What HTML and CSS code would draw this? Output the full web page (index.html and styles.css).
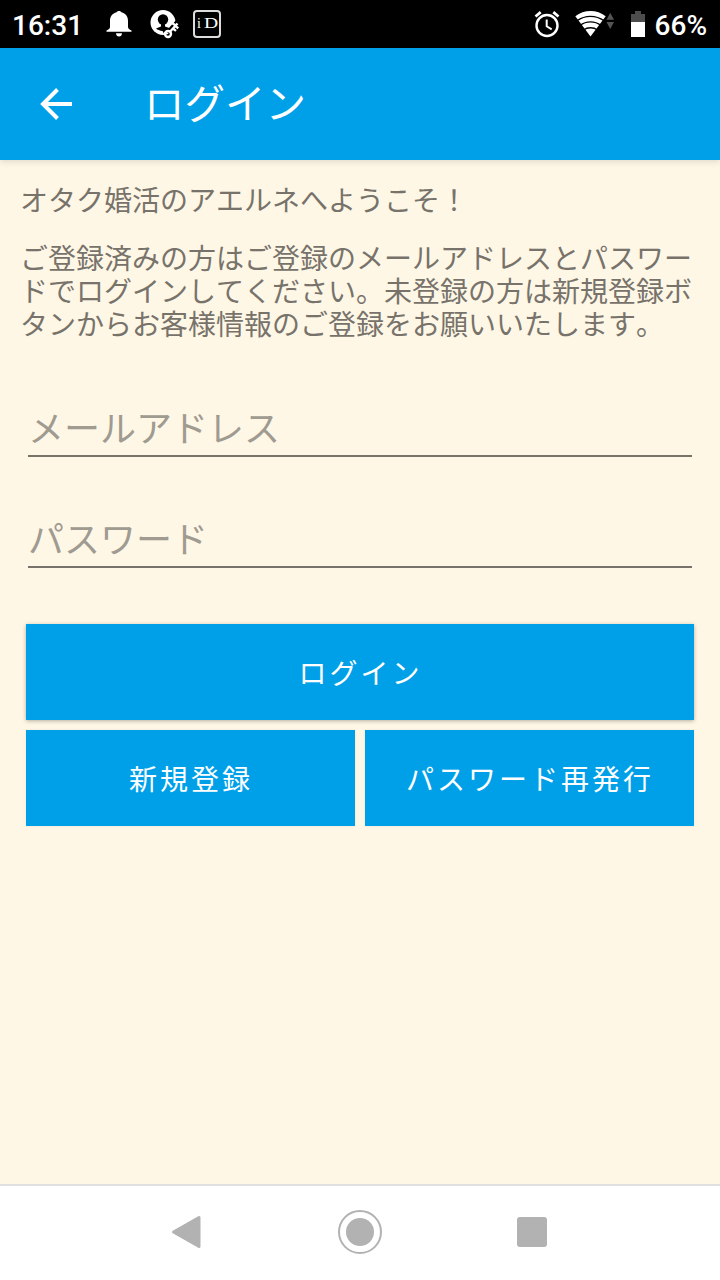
FILE: index.html
```html
<!DOCTYPE html>
<html lang="ja">
<head>
    <meta charset="UTF-8">
    <meta name="viewport" content="width=device-width, initial-scale=1.0">
    <title>ログイン</title>
    <link rel="stylesheet" href="styles.css">
</head>
<body>
    <div class="screen">
        <div class="status-bar">
            <div class="status-left">
                <span class="time">16:31</span>
                <svg class="icon-bell" width="26" height="28" viewBox="0 0 26 28" fill="#fff">
                    <path d="M13 1c1.400 0 2.100.6 2.400 1.300C19.600 3.300 22 6.500 22 10.800V17c0 1.500 1.300 2.700 3.500 3.600v1.200H.5v-1.200C2.700 19.700 4 18.500 4 17v-6.200C4 6.500 6.400 3.300 10.600 2.300 10.900 1.600 11.600 1 13 1z"/>
                    <path d="M10 23.200h6c0 2-1.300 3.300-3 3.300s-3-1.300-3-3.300z"/>
                </svg>
                <svg class="icon-user" width="30" height="30" viewBox="0 0 30 30">
                    <circle cx="13" cy="13.500" r="12.500" fill="#fff"/>
                    <circle cx="13" cy="10.500" r="5.200" fill="#000"/>
                    <path d="M11 14h4v3.500l5 1.800-5.500 6.200-2-3.500c-2.800-.3-5-1.200-6.500-2.500l5-2z" fill="#000"/>
                    <path d="M18.500 24.500L29 13" stroke="#000" stroke-width="7"/>
                    <circle cx="18" cy="25" r="3" fill="none" stroke="#fff" stroke-width="2.400"/>
                    <path d="M20 22.800L27.500 14.500M25.500 16.500l-3-2.200M23 19.500l3 2.400M25.300 17l3 2.200" fill="none" stroke="#fff" stroke-width="2.400"/>
                </svg>
                <span class="icon-id"><span>i</span><span class="id-wide">D</span></span>
            </div>
            <div class="status-right">
                <svg class="icon-alarm" width="26" height="28" viewBox="0 0 26 28" fill="none" stroke="#fff">
                    <circle cx="13" cy="15.500" r="10.500" stroke-width="2.400"/>
                    <path d="M12.700 9.500v6.800l5 3" stroke-width="2"/>
                    <path d="M1.500 6.500l5.200-4.300M24.500 6.500l-5.200-4.300" stroke-width="2.800"/>
                </svg>
                <svg class="icon-wifi" width="40" height="28" viewBox="0 0 40 28">
                    <path d="M.3 6.200C9-.8 22-.8 30.700 6.200L15.500 26.500z" fill="#fff"/>
                    <path d="M2 10.800c8-6 19-6 27 0M5 15.400c6.300-4.700 14.700-4.700 21 0M8.500 20c4-3 10-3 14 0" fill="none" stroke="#000" stroke-width="1.300"/>
                    <path d="M31.500 9.800h7.500L35.200 2.800zM31.500 12h7.500l-3.800 7z" fill="#555"/>
                </svg>
                <svg class="icon-battery" width="14" height="26" viewBox="0 0 14 26">
                    <path d="M4 0h6v3h4v8H0V3h4z" fill="#4d4d4d"/>
                    <path d="M0 11h14v15H0z" fill="#fff"/>
                </svg>
                <span class="percent">66%</span>
            </div>
        </div>

        <header class="app-bar">
            <svg width="32" height="32" viewBox="0 0 32 32" fill="none" stroke="#fff" stroke-width="4">
                <path d="M32 16H3M17.500 1.500L3 16l14.500 14.500"/>
            </svg>
            <h1>ログイン</h1>
        </header>

        <main class="content">
            <p class="welcome">オタク婚活のアエルネへようこそ！</p>
            <p class="description">ご登録済みの方はご登録のメールアドレスとパスワードでログインしてください。未登録の方は新規登録ボタンからお客様情報のご登録をお願いいたします。</p>
            <form class="login-form">
                <input type="email" class="field" placeholder="メールアドレス">
                <input type="password" class="field" placeholder="パスワード">
                <div class="buttons">
                    <button type="button" class="btn btn-login">ログイン</button>
                    <button type="button" class="btn">新規登録</button>
                    <button type="button" class="btn">パスワード再発行</button>
                </div>
            </form>
        </main>

        <nav class="nav-bar">
            <svg width="32" height="34" viewBox="0 0 32 34">
                <path d="M28 2.500v29L2.500 17z" fill="#b2b2b2" stroke="#b2b2b2" stroke-width="3" stroke-linejoin="round"/>
            </svg>
            <svg width="44" height="44" viewBox="0 0 44 44">
                <circle cx="22" cy="22" r="21" fill="none" stroke="#b2b2b2" stroke-width="2"/>
                <circle cx="22" cy="22" r="14" fill="#b2b2b2"/>
            </svg>
            <div class="nav-recent"></div>
        </nav>
    </div>
</body>
</html>
```
FILE: styles.css
```css
* {
    box-sizing: border-box;
}
body {
    margin: 0;
    padding: 0;
    font-family: "Noto Sans CJK JP", sans-serif;
    font-kerning: none;
}
.screen {
    width: 720px;
    height: 1280px;
    display: flex;
    flex-direction: column;
    background: #fff7e6;
    overflow: hidden;
}

/* status bar */
.status-bar {
    height: 48px;
    padding: 0 13px 0 12px;
    background: #000;
    color: #fff;
    display: flex;
    justify-content: space-between;
    font-family: Roboto, sans-serif;
    font-size: 28px;
    font-weight: 500;
}
.status-left,
.status-right {
    display: flex;
    align-items: center;
}
.time,
.percent {
    padding-top: 3px;
    line-height: 33px;
}
.time {
    width: 94px;
}
.icon-user {
    margin-left: 18px;
}
.icon-id {
    width: 28px;
    height: 28px;
    margin-left: 13px;
    border: 2px solid #ddd;
    border-radius: 4px;
    display: flex;
    align-items: center;
    justify-content: center;
    gap: 3px;
    font-family: "Liberation Serif", serif;
    font-size: 14px;
    font-weight: 400;
    line-height: 24px;
}
.id-wide {
    width: 13px;
    transform: scaleX(1.4);
    transform-origin: left;
}
.icon-wifi {
    margin-left: 15px;
}
.icon-battery {
    margin-left: 16px;
}
.percent {
    margin-left: 10px;
}

/* app bar */
.app-bar {
    height: 112px;
    padding-left: 40px;
    background: #00a0e9;
    color: #fff;
    display: flex;
    align-items: center;
    gap: 72px;
    box-shadow: 0 2px 6px rgba(0, 0, 0, 0.12);
}
.app-bar h1 {
    margin: 0;
    padding-bottom: 4px;
    font-size: 40.5px;
    font-weight: 400;
    line-height: 60px;
}

/* content */
.content {
    flex: 1;
    padding: 23px 20px 0;
    color: #77736b;
}
.content p {
    margin: 0;
    font-size: 28px;
    font-weight: 400;
    line-height: 33px;
}
.content .description {
    width: 680px;
    margin-top: 25px;
}
.login-form {
    margin-top: 59px;
    padding: 0 6px;
}
.field {
    display: block;
    width: 664px;
    height: 58px;
    margin: 0 2px 53px;
    padding: 0 0 3px;
    border: none;
    border-bottom: 2px solid #77736b;
    background: transparent;
    color: #77736b;
    font-family: inherit;
    font-size: 36px;
    font-weight: 400;
    outline: none;
}
.field::placeholder {
    color: #a09b91;
    opacity: 1;
}
.buttons {
    margin-top: 56px;
    display: grid;
    grid-template-columns: 1fr 1fr;
    gap: 10px;
}
.btn {
    height: 96px;
    padding: 0 0 1px 1px;
    border: none;
    background: #00a0e9;
    color: #fff;
    font-family: inherit;
    font-size: 28px;
    font-weight: 400;
    letter-spacing: 3px;
    box-shadow: 0 0 2px rgba(0, 0, 0, 0.1);
}
.btn-login {
    grid-column: 1 / 3;
    box-shadow: 0 1px 4px rgba(0, 0, 0, 0.3);
}

/* navigation bar */
.nav-bar {
    height: 96px;
    padding: 0 173px 2px 171px;
    border-top: 2px solid #e0e0e0;
    background: #fff;
    display: flex;
    align-items: center;
    justify-content: space-between;
}
.nav-recent {
    width: 30px;
    height: 30px;
    border-radius: 3px;
    background: #b2b2b2;
}
```
